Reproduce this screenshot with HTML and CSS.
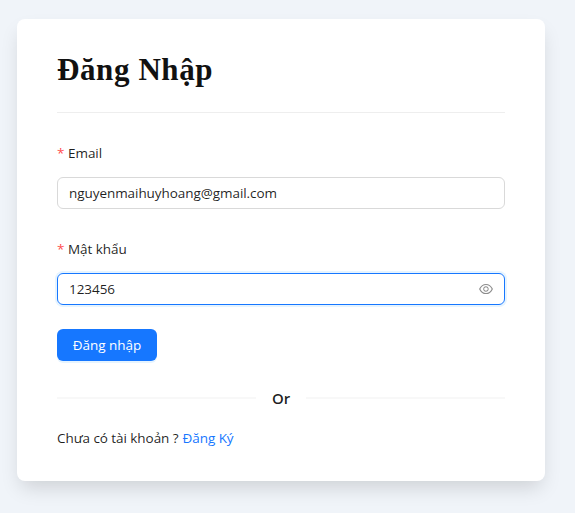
FILE: index.html
```html
<!DOCTYPE html>
<html lang="vi">
<head>
<meta charset="utf-8">
<title>Đăng Nhập</title>
<link rel="stylesheet" href="styles.css">
</head>
<body>
<main class="card">
  <h1 class="title">Đăng Nhập</h1>
  <hr class="rule">
  <form class="form">
    <label class="label" for="email"><span class="star">*</span><span>Email</span></label>
    <div class="field"><input class="input" id="email" type="text" value="nguyenmaihuyhoang@gmail.com"></div>
    <label class="label" for="password"><span class="star">*</span><span>Mật khẩu</span></label>
    <div class="field field-focused">
      <input class="input" id="password" type="text" value="123456">
      <svg class="eye" viewBox="64 64 896 896" aria-hidden="true"><path d="M942.2 486.2C847.4 286.5 704.1 186 512 186c-192.2 0-335.4 100.5-430.2 300.3a60.3 60.3 0 000 51.5C176.6 737.5 319.9 838 512 838c192.2 0 335.4-100.5 430.2-300.3 7.7-16.2 7.7-35 0-51.5zM512 766c-161.3 0-279.4-81.8-362.7-254C232.6 339.8 350.7 258 512 258c161.3 0 279.4 81.8 362.7 254C791.5 684.2 673.4 766 512 766zm-4-430c-97.2 0-176 78.8-176 176s78.8 176 176 176 176-78.8 176-176-78.8-176-176-176zm0 288c-61.9 0-112-50.1-112-112s50.1-112 112-112 112 50.1 112 112-50.1 112-112 112z"/></svg>
    </div>
    <button class="button" type="button">Đăng nhập</button>
  </form>
  <div class="divider"><span class="divider-text">Or</span></div>
  <p class="signup"><span>Chưa có tài khoản ?</span><a class="link" href="#">Đăng Ký</a></p>
</main>
</body>
</html>
```
FILE: styles.css
```css
* { box-sizing: border-box; }
body {
  margin: 0;
  padding: 19px 30px 32px 17px;
  height: 513px;
  overflow: hidden;
  background: #f0f4f9;
  color: rgba(0, 0, 0, 0.88);
  font: 13.5px/22px "Open Sans", "Noto Sans", sans-serif;
  letter-spacing: -0.06px;
}
.card {
  height: 462px;
  padding: 30px 40px;
  border-radius: 8px;
  background: #fff;
  box-shadow: 0 10px 20px -4px rgba(0, 0, 0, 0.15);
}
.title {
  margin: 0;
  color: #111;
  font: bold 31px/42px "Liberation Serif", serif;
  letter-spacing: 0.6px;
}
.rule {
  height: 1px;
  margin: 21px 0 24px;
  border: 0;
  background: #eee;
}
.form { display: flex; flex-direction: column; }
.label { display: flex; height: 32px; line-height: 32px; margin-bottom: 8px; }
.star { width: 11px; color: #ff4d4f; }
.field {
  display: flex;
  align-items: center;
  height: 32px;
  margin-bottom: 24px;
  padding: 0 11px;
  border: 1px solid #d9d9d9;
  border-radius: 6px;
}
.field-focused { border-color: #1677ff; box-shadow: 0 0 0 2px rgba(5, 145, 255, 0.1); }
.input {
  flex: 1;
  min-width: 0;
  padding: 0;
  border: 0;
  outline: 0;
  background: none;
  color: inherit;
  font: inherit;
  letter-spacing: inherit;
}
.eye { width: 14px; height: 14px; fill: rgba(0, 0, 0, 0.45); }
.button {
  width: 100px;
  height: 32px;
  padding: 0;
  border: 0;
  border-radius: 6px;
  background: #1677ff;
  box-shadow: 0 2px 0 rgba(5, 145, 255, 0.1);
  color: #fff;
  font: inherit;
}
.divider {
  display: flex;
  align-items: center;
  gap: 16px;
  height: 24px;
  margin: 25px 0 17px;
  font-size: 15px;
  font-weight: 600;
}
.divider::before, .divider::after { content: ""; flex: 1; height: 2px; background: #f8f8f8; }
.signup { display: flex; gap: 4px; margin: 0; }
.link { color: #1677ff; text-decoration: none; }
```
